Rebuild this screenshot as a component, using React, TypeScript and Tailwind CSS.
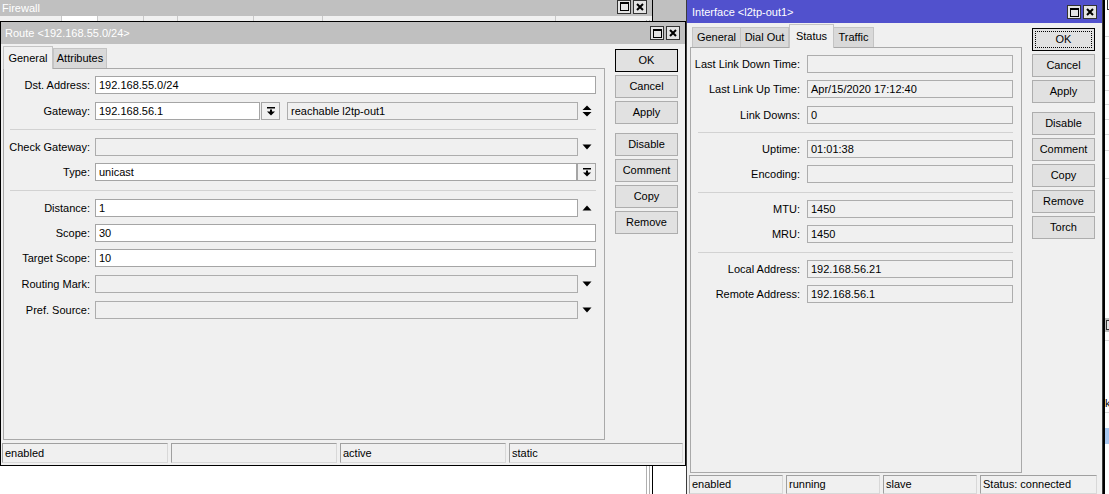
import React from "react";

function TitleButtons() {
  return (
    <div className="flex gap-[2px]">
      <div className="w-[14px] h-[14px] border border-[#333] bg-[#e4e4e4] flex items-center justify-center">
        <div className="w-[9px] h-[9px] border border-black border-t-2" />
      </div>
      <div className="w-[14px] h-[14px] border border-[#333] bg-[#e4e4e4] flex items-center justify-center">
        <svg width="8" height="8" viewBox="0 0 8 8">
          <path d="M1 1L7 7M7 1L1 7" stroke="#000" strokeWidth="2" />
        </svg>
      </div>
    </div>
  );
}

function DownArrow() {
  return (
    <svg width="10" height="6" viewBox="0 0 10 6">
      <path d="M0.5 0.5H9.5L5 5.5Z" fill="#000" />
    </svg>
  );
}

function UpArrow() {
  return (
    <svg width="10" height="6" viewBox="0 0 10 6">
      <path d="M0.5 5.5H9.5L5 0.5Z" fill="#000" />
    </svg>
  );
}

function UpDownArrow() {
  return (
    <svg width="10" height="12" viewBox="0 0 10 12">
      <path d="M5 0.5L9.5 5H0.5Z M0.5 7H9.5L5 11.5Z" fill="#000" />
    </svg>
  );
}

function MoreIcon() {
  return (
    <svg width="8" height="9" viewBox="0 0 8 9">
      <path d="M0 0H8V1.5H0Z M3 2.5H5V4.5H3Z M0 4.5H8L4 8.5Z" fill="#000" />
    </svg>
  );
}

function Box({ value, white, className }: { value?: string; white?: boolean; className?: string }) {
  return (
    <div
      className={`h-[18px] border flex items-center px-[3px] whitespace-nowrap overflow-hidden ${
        white ? "bg-white border-[#a5a5a5]" : "bg-[#f0f0f0] border-[#adadad]"
      } ${className ?? ""}`}
    >
      {value}
    </div>
  );
}

function MoreButton() {
  return (
    <div className="w-[19px] h-[18px] border border-[#a5a5a5] bg-[#f0f0f0] flex items-center justify-center">
      <MoreIcon />
    </div>
  );
}

function ArrowCell({ kind }: { kind: "down" | "up" | "updown" }) {
  return (
    <div className="w-[18px] h-full flex items-center justify-center">
      {kind === "down" && <DownArrow />}
      {kind === "up" && <UpArrow />}
      {kind === "updown" && <UpDownArrow />}
    </div>
  );
}

function Row({ label, mt, labelW, gap, children }: { label: string; mt: string; labelW: string; gap: string; children: React.ReactNode }) {
  return (
    <div className={`flex items-center h-[18px] pr-[8px] ${mt}`}>
      <div className={`${labelW} text-right whitespace-nowrap`}>{label}</div>
      <div className={`${gap} flex-1 flex items-center h-full`}>{children}</div>
    </div>
  );
}

function Sep({ mt, ml }: { mt: string; ml: string }) {
  return <div className={`h-px bg-[#d2d2d2] mr-[8px] ${mt} ${ml}`} />;
}

function Btn({ label, className, focus, def }: { label: string; className?: string; focus?: boolean; def?: boolean }) {
  return (
    <div
      className={`relative w-[63px] h-[23px] border flex items-center justify-center bg-[#e1e1e1] ${
        def ? "border-black" : "border-[#adadad]"
      } ${className ?? ""}`}
    >
      {focus && <div className="absolute inset-[2px] border border-dotted border-black" />}
      {label}
    </div>
  );
}

function StatusCell({ text, w }: { text?: string; w: string }) {
  return (
    <div className={`${w} h-full border border-t-[#a0a0a0] border-l-[#a0a0a0] border-r-[#d8d8d8] border-b-[#d8d8d8] flex items-center pl-[2px] whitespace-nowrap`}>
      {text}
    </div>
  );
}

function RouteWindow() {
  return (
    <div className="absolute left-0 top-[21px] w-[686px] h-[445px] border border-black bg-[#f0f0f0] flex flex-col z-10">
      <div className="h-[22px] bg-[#c0c0c0] flex items-center justify-between pl-[4px] pr-[5px]">
        <span className="text-white">Route &lt;192.168.55.0/24&gt;</span>
        <TitleButtons />
      </div>
      <div className="h-[396px] flex">
        <div className="pl-[2px] pt-[2px]">
          <div className="h-[22px] flex items-end">
            <div className="relative z-10 -mb-px w-[50px] h-[23px] border border-b-0 border-[#c4c4c4] bg-[#f0f0f0] flex items-center justify-center">
              General
            </div>
            <div className="w-[54px] h-[20px] border border-b-0 border-[#c4c4c4] bg-[#d9d9d9] flex items-center justify-center">
              Attributes
            </div>
          </div>
          <div className="w-[602px] h-[372px] border border-[#a9a9a9] pt-[7px]">
            <Row label="Dst. Address:" mt="" labelW="w-[86px]" gap="ml-[5px]">
              <Box white value="192.168.55.0/24" className="flex-1" />
            </Row>
            <Row label="Gateway:" mt="mt-[8px]" labelW="w-[86px]" gap="ml-[5px]">
              <Box white value="192.168.56.1" className="w-[165px]" />
              <div className="ml-[1px]">
                <MoreButton />
              </div>
              <Box value="reachable l2tp-out1" className="ml-[7px] flex-1" />
              <ArrowCell kind="updown" />
            </Row>
            <Sep mt="mt-[9px]" ml="ml-[6px]" />
            <Row label="Check Gateway:" mt="mt-[8px]" labelW="w-[86px]" gap="ml-[5px]">
              <Box className="flex-1" />
              <ArrowCell kind="down" />
            </Row>
            <Row label="Type:" mt="mt-[7px]" labelW="w-[86px]" gap="ml-[5px]">
              <Box white value="unicast" className="flex-1" />
              <MoreButton />
            </Row>
            <Sep mt="mt-[9px]" ml="ml-[6px]" />
            <Row label="Distance:" mt="mt-[8px]" labelW="w-[86px]" gap="ml-[5px]">
              <Box white value="1" className="flex-1" />
              <ArrowCell kind="up" />
            </Row>
            <Row label="Scope:" mt="mt-[7px]" labelW="w-[86px]" gap="ml-[5px]">
              <Box white value="30" className="flex-1" />
            </Row>
            <Row label="Target Scope:" mt="mt-[7px]" labelW="w-[86px]" gap="ml-[5px]">
              <Box white value="10" className="flex-1" />
            </Row>
            <Row label="Routing Mark:" mt="mt-[8px]" labelW="w-[86px]" gap="ml-[5px]">
              <Box className="flex-1" />
              <ArrowCell kind="down" />
            </Row>
            <Row label="Pref. Source:" mt="mt-[8px]" labelW="w-[86px]" gap="ml-[5px]">
              <Box className="flex-1" />
              <ArrowCell kind="down" />
            </Row>
          </div>
        </div>
        <div className="ml-[10px] pt-[5px] flex flex-col gap-[3px]">
          <Btn label="OK" def />
          <Btn label="Cancel" />
          <Btn label="Apply" />
          <Btn label="Disable" className="mt-[6px]" />
          <Btn label="Comment" />
          <Btn label="Copy" />
          <Btn label="Remove" />
        </div>
      </div>
      <div className="mt-[3px] h-[20px] flex gap-[3px] pl-[1px]">
        <StatusCell text="enabled" w="w-[166px]" />
        <StatusCell w="w-[166px]" />
        <StatusCell text="active" w="w-[166px]" />
        <StatusCell text="static" w="w-[174px]" />
      </div>
    </div>
  );
}

function InterfaceWindow() {
  const L = "w-[109px]";
  const G = "ml-[7px]";
  return (
    <div className="absolute left-[686px] top-[-1px] w-[417px] h-[510px] border border-[#3c3c3c] bg-[#f0f0f0] flex flex-col z-20">
      <div className="h-[23px] bg-[#5151cd] flex items-center justify-between pl-[5px] pr-[5px] pt-[1px]">
        <span className="text-white">Interface &lt;l2tp-out1&gt;</span>
        <TitleButtons />
      </div>
      <div className="flex">
        <div className="pl-[3px] pt-[1px]">
          <div className="h-[23px] flex items-end pl-[2px]">
            <div className="w-[49px] h-[20px] border border-b-0 border-[#c4c4c4] bg-[#d9d9d9] flex items-center justify-center">
              General
            </div>
            <div className="w-[48px] h-[20px] border border-b-0 border-l-0 border-[#c4c4c4] bg-[#d9d9d9] flex items-center justify-center">
              Dial Out
            </div>
            <div className="relative z-10 -mb-px w-[45px] h-[24px] border border-b-0 border-[#c4c4c4] bg-[#f0f0f0] flex items-start pt-[3px] justify-center">
              Status
            </div>
            <div className="w-[40px] h-[20px] border border-b-0 border-l-0 border-[#c4c4c4] bg-[#d9d9d9] flex items-center justify-center">
              Traffic
            </div>
          </div>
          <div className="w-[332px] h-[426px] border border-[#a9a9a9] pt-[7px]">
            <Row label="Last Link Down Time:" mt="" labelW={L} gap={G}>
              <Box className="flex-1" />
            </Row>
            <Row label="Last Link Up Time:" mt="mt-[7px]" labelW={L} gap={G}>
              <Box value="Apr/15/2020 17:12:40" className="flex-1" />
            </Row>
            <Row label="Link Downs:" mt="mt-[8px]" labelW={L} gap={G}>
              <Box value="0" className="flex-1" />
            </Row>
            <Sep mt="mt-[8px]" ml="ml-[7px]" />
            <Row label="Uptime:" mt="mt-[7px]" labelW={L} gap={G}>
              <Box value="01:01:38" className="flex-1" />
            </Row>
            <Row label="Encoding:" mt="mt-[7px]" labelW={L} gap={G}>
              <Box className="flex-1" />
            </Row>
            <Sep mt="mt-[9px]" ml="ml-[7px]" />
            <Row label="MTU:" mt="mt-[7px]" labelW={L} gap={G}>
              <Box value="1450" className="flex-1" />
            </Row>
            <Row label="MRU:" mt="mt-[7px]" labelW={L} gap={G}>
              <Box value="1450" className="flex-1" />
            </Row>
            <Sep mt="mt-[9px]" ml="ml-[7px]" />
            <Row label="Local Address:" mt="mt-[7px]" labelW={L} gap={G}>
              <Box value="192.168.56.21" className="flex-1" />
            </Row>
            <Row label="Remote Address:" mt="mt-[7px]" labelW={L} gap={G}>
              <Box value="192.168.56.1" className="flex-1" />
            </Row>
          </div>
        </div>
        <div className="ml-[10px] pt-[5px] flex flex-col gap-[3px]">
          <Btn label="OK" def focus />
          <Btn label="Cancel" />
          <Btn label="Apply" />
          <Btn label="Disable" className="mt-[6px]" />
          <Btn label="Comment" />
          <Btn label="Copy" />
          <Btn label="Remove" />
          <Btn label="Torch" />
        </div>
      </div>
      <div className="mt-[2px] h-[19px] flex gap-[3px] pl-[2px]">
        <StatusCell text="enabled" w="w-[94px]" />
        <StatusCell text="running" w="w-[94px]" />
        <StatusCell text="slave" w="w-[94px]" />
        <StatusCell text="Status: connected" w="w-[117px]" />
      </div>
    </div>
  );
}

function FirewallWindow() {
  return (
    <div className="absolute left-0 top-0 w-[653px] h-[520px] border-r border-black bg-white">
      <div className="h-[16px] bg-[#c0c0c0] flex items-center justify-between pl-[2px] pr-[5px]">
        <span className="text-white">Firewall</span>
        <div className="-mt-[3px]">
          <TitleButtons />
        </div>
      </div>
      <div className="h-[5px] bg-[#f0f0f0] relative">
        <div className="absolute left-[61px] w-[37px] h-full bg-white border-x border-[#c8c8c8]" />
        <div className="absolute left-[143px] w-px h-full bg-[#c8c8c8]" />
        <div className="absolute left-[177px] w-px h-full bg-[#c8c8c8]" />
        <div className="absolute left-[253px] w-px h-full bg-[#c8c8c8]" />
        <div className="absolute left-[322px] w-px h-full bg-[#c8c8c8]" />
        <div className="absolute left-[555px] w-px h-full bg-[#c8c8c8]" />
      </div>
      <div className="absolute right-[2px] top-[20px] bottom-0 w-[4px] border-x border-[#b0b0b0]" />
    </div>
  );
}

function RightBackground() {
  return (
    <div className="absolute left-[1103px] top-0 w-[20px] h-[494px] bg-white border-l-2 border-black">
      <div className="h-[12px] w-[12px] ml-[2px] mt-[-2px] border border-[#333]" />
      <div className="absolute top-[36px] left-0 right-0 h-px bg-[#d8d8d8]" />
      <div className="absolute top-[58px] left-0 right-0 h-px bg-[#d8d8d8]" />
      <div className="absolute top-[75px] left-0 right-0 h-px bg-[#d8d8d8]" />
      <div className="absolute top-[90px] left-0 right-0 h-px bg-[#d8d8d8]" />
      <div className="absolute top-[104px] left-0 right-0 h-px bg-[#d8d8d8]" />
      <div className="absolute top-[119px] left-0 right-0 h-px bg-[#d8d8d8]" />
      <div className="absolute top-[134px] left-0 right-0 h-px bg-[#d8d8d8]" />
      <div className="absolute top-[150px] left-0 right-0 h-px bg-[#d8d8d8]" />
      <div className="absolute top-[178px] left-0 right-0 h-px bg-[#d8d8d8]" />
      <div className="absolute top-[318px] left-0 right-0 h-[14px] bg-[#c0c0c0]">
        <div className="w-[10px] h-[10px] mt-[2px] ml-[1px] border border-[#333] bg-[#e4e4e4]" />
      </div>
      <div className="absolute top-[340px] left-0 right-0 h-px bg-[#d8d8d8]" />
      <div className="absolute top-[398px] left-0 text-[11px] leading-none">ke</div>
      <div className="absolute top-[412px] left-0 right-0 h-px bg-[#d8d8d8]" />
      <div className="absolute top-[428px] left-0 right-0 h-[16px] bg-[#a9c7ef]" />
    </div>
  );
}

export default function App() {
  return (
    <div className="relative w-[1109px] h-[494px] overflow-hidden bg-white text-[11px] text-black font-['Liberation_Sans',Arial,sans-serif]">
      <div className="absolute left-[640px] top-0 w-[60px] h-[22px] bg-[#c0c0c0]" />
      <FirewallWindow />
      <RightBackground />
      <RouteWindow />
      <InterfaceWindow />
    </div>
  );
}
